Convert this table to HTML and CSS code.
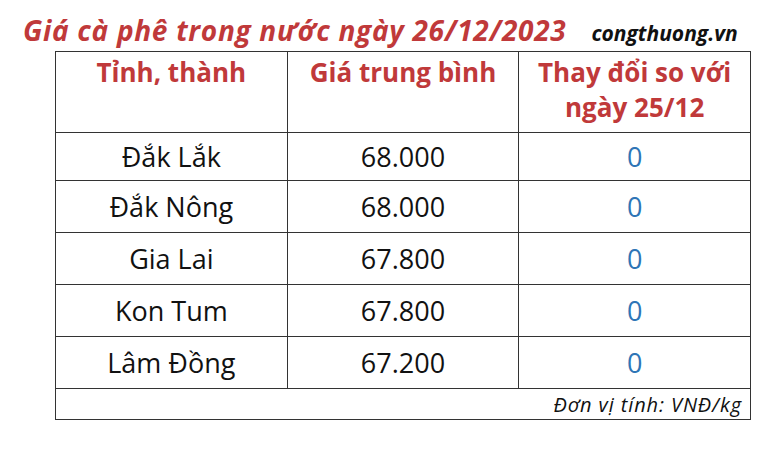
FILE: index.html
```html
<!DOCTYPE html>
<html lang="vi">
<head>
<meta charset="utf-8">
<link rel="stylesheet" href="styles.css">
</head>
<body>
<div class="page">
  <div class="heading">
    <h1 class="title">Giá cà phê trong nước ngày 26/12/2023</h1>
    <span class="source">congthuong.vn</span>
  </div>
  <table class="prices">
    <thead>
      <tr class="head-row">
        <th>Tỉnh, thành</th>
        <th>Giá trung bình</th>
        <th>Thay đổi so với<br>ngày 25/12</th>
      </tr>
    </thead>
    <tbody>
      <tr class="row row-first"><td>Đắk Lắk</td><td>68.000</td><td class="change">0</td></tr>
      <tr class="row"><td>Đắk Nông</td><td>68.000</td><td class="change">0</td></tr>
      <tr class="row"><td>Gia Lai</td><td>67.800</td><td class="change">0</td></tr>
      <tr class="row"><td>Kon Tum</td><td>67.800</td><td class="change">0</td></tr>
      <tr class="row"><td>Lâm Đồng</td><td>67.200</td><td class="change">0</td></tr>
      <tr class="foot-row"><td colspan="3" class="unit">Đơn vị tính: VNĐ/kg</td></tr>
    </tbody>
  </table>
</div>
</body>
</html>
```
FILE: styles.css
```css
html, body {
  margin: 0;
  padding: 0;
  background: #ffffff;
}
body {
  width: 772px;
  height: 450px;
  overflow: hidden;
  font-family: "Open Sans", "Lato", sans-serif;
  color: #111111;
}
.page {
  padding-top: 11px;
}
.heading {
  display: flex;
  align-items: baseline;
  padding-left: 23px;
  height: 40px;
}
.title {
  margin: 0;
  font-size: 28px;
  line-height: 38px;
  font-weight: 700;
  font-style: italic;
  color: #c0393a;
  letter-spacing: 0.7px;
}
.source {
  margin-left: 25px;
  font-size: 21px;
  font-weight: 700;
  font-style: italic;
  color: #111111;
}
.prices {
  margin-left: 55px;
  width: 696px;
  border-collapse: collapse;
  table-layout: fixed;
  border: 1.5px solid #333333;
}
.prices th, .prices td {
  border: 1.5px solid #333333;
  padding: 0;
  text-align: center;
}
.head-row th {
  height: 77px;
  vertical-align: top;
  padding-top: 3px;
  font-size: 26px;
  line-height: 35px;
  font-weight: 700;
  color: #c0393a;
}
.row td {
  height: 51px;
  vertical-align: middle;
  font-size: 27px;
  font-weight: 400;
  color: #111111;
}
.row-first td {
  height: 46.5px;
}
.row .change {
  color: #2e75b6;
}
.foot-row td {
  height: 28px;
}
.prices .unit {
  text-align: right;
  padding-right: 8px;
  padding-top: 2px;
  font-size: 20px;
  letter-spacing: 0.9px;
  font-style: italic;
  color: #111111;
}
```
